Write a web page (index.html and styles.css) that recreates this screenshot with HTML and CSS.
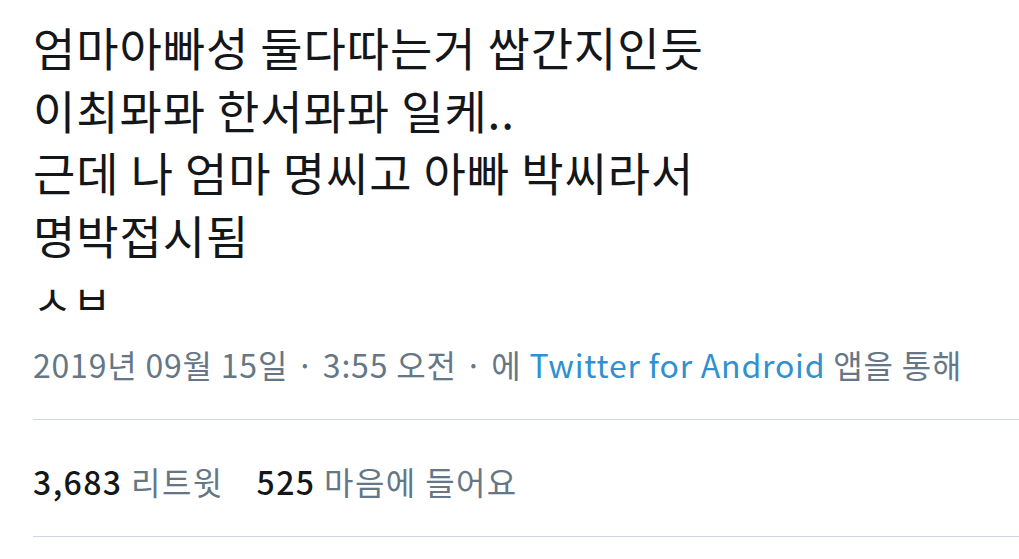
FILE: index.html
```html
<!DOCTYPE html>
<html>
<head>
  <meta charset="utf-8">
  <title>Tweet</title>
  <link rel="stylesheet" href="styles.css">
</head>
<body>
  <div class="tweet">
    <div class="tweet-text">엄마아빠성 둘다따는거 쌉간지인듯<br>이최뫄뫄 한서뫄뫄 일케..<br>근데 나 엄마 명씨고 아빠 박씨라서<br>명박접시됨<br><span class="jamo">ㅅㅂ</span></div>

    <div class="meta">
      2019년 09월 15일 · 3:55 오전 · 에 <a href="#" class="source">Twitter for Android</a> 앱을 통해
    </div>

    <div class="stats">
      <span class="stat"><b>3,683</b> 리트윗</span>
      <span class="stat"><b>525</b> 마음에 들어요</span>
    </div>
  </div>
</body>
</html>
```

FILE: styles.css
```css
body {
  margin: 0;
  background: #fff;
  font-family: "Noto Sans CJK KR", "Noto Sans", sans-serif;
  color: #14171a;
}
.tweet {
  padding: 15px 0 0 33px;
}
.tweet-text {
  font-size: 46px;
  line-height: 62.5px;
  letter-spacing: 0.9px;
  color: #14171a;
  padding-bottom: 11px;
}
.jamo {
  font-size: 42px;
}
.meta {
  font-size: 32px;
  letter-spacing: 0.8px;
  color: #657786;
  padding-bottom: 32px;
  border-bottom: 1px solid #ccd6dd;
}
.source {
  color: #3090d0;
  text-decoration: none;
}
.stats {
  font-size: 32px;
  letter-spacing: 1.4px;
  color: #657786;
  padding: 38px 0 32px;
  border-bottom: 1px solid #ccd6dd;
  display: flex;
  gap: 33px;
}
.stats b {
  color: #14171a;
  font-weight: 500;
}
```
